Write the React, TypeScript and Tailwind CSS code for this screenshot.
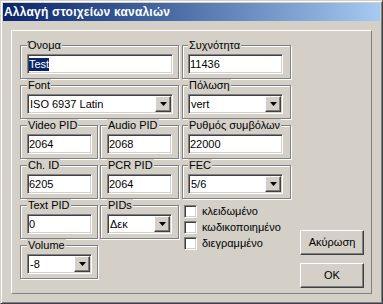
import React from "react";

// Win2000 style bevels
const sunken =
  "border border-t-[#808080] border-l-[#808080] border-b-white border-r-white shadow-[inset_1px_1px_0_#404040,inset_-1px_-1px_0_#d4d0c8]";
const raised =
  "border border-t-white border-l-white border-b-[#404040] border-r-[#404040] shadow-[inset_-1px_-1px_0_#808080]";

function Group({
  label,
  className = "",
  children,
}: {
  label: string;
  className?: string;
  children: React.ReactNode;
}) {
  return (
    <div
      className={`h-[34px] border border-[#808080] shadow-[inset_1px_1px_0_#fff,1px_1px_0_#fff] pl-[6px] ${className}`}
    >
      <div className="-mt-[7px] w-fit bg-[#d4d0c8] px-[1px] leading-[13px]">{label}</div>
      {children}
    </div>
  );
}

function Edit({ value, w }: { value: React.ReactNode; w: string }) {
  return (
    <div className={`mt-[2px] flex h-[20px] items-center bg-white pl-[1px] ${sunken} ${w}`}>
      {value}
    </div>
  );
}

function Combo({ value, w }: { value: string; w: string }) {
  return (
    <div className={`mt-[2px] flex h-[20px] items-center bg-white ${sunken} ${w}`}>
      <span className="flex-1 pl-[2px]">{value}</span>
      <div
        className={`mr-[1px] flex h-[16px] w-[16px] items-center justify-center bg-[#d4d0c8] ${raised}`}
      >
        <svg width="7" height="4" viewBox="0 0 7 4">
          <polygon points="0,0 7,0 3.5,4" fill="#000" />
        </svg>
      </div>
    </div>
  );
}

function Check({ label }: { label: string }) {
  return (
    <div className="flex h-[13px] items-center gap-[5px]">
      <div className={`h-[13px] w-[13px] bg-white ${sunken}`} />
      <span className="leading-[13px]">{label}</span>
    </div>
  );
}

function Btn({ label }: { label: string }) {
  return (
    <div
      className={`flex h-[25px] w-[64px] items-center justify-center bg-[#d4d0c8] ${raised}`}
    >
      {label}
    </div>
  );
}

export default function App() {
  return (
    <div className="h-[304px] w-[383px] bg-[#d4d0c8] font-['Liberation_Sans',Arial,sans-serif] text-[11px] text-black">
      <div className="flex h-full w-full flex-col border border-t-[#d4d0c8] border-l-[#d4d0c8] border-b-[#404040] border-r-[#404040] p-[2px] shadow-[inset_1px_1px_0_#fff,inset_-1px_-1px_0_#808080]">
        {/* title bar */}
        <div className="flex h-[18px] items-center bg-linear-to-r from-[#0a246a] to-[#a6caf0] pl-[1px]">
          <span className="text-[12px] font-bold tracking-[0.2px] text-white">
            Αλλαγή στοιχείων καναλιών
          </span>
        </div>

        {/* main panel */}
        <div className="mx-[8px] mb-[7px] mt-[9px] flex flex-1 border border-t-white border-l-white border-b-[#808080] border-r-[#808080]">
          <div className="grid grid-cols-[80px_82px_110px] gap-y-[6px] self-start pl-[8px] pt-[14px]">
            <Group label="Όνομα" className="col-span-2 w-[159px]">
              <Edit
                w="w-[146px]"
                value={<span className="bg-[#0a246a] leading-[13px] text-white">Test</span>}
              />
            </Group>
            <Group label="Συχνότητα" className="w-[109px] !pl-[5px]">
              <Edit w="w-[95px]" value="11436" />
            </Group>

            <Group label="Font" className="col-span-2 w-[159px]">
              <Combo w="w-[146px]" value="ISO 6937 Latin" />
            </Group>
            <Group label="Πόλωση" className="w-[109px] !pl-[5px]">
              <Combo w="w-[95px]" value="vert" />
            </Group>

            <Group label="Video PID" className="w-[78px]">
              <Edit w="w-[65px]" value="2064" />
            </Group>
            <Group label="Audio PID" className="w-[79px]">
              <Edit w="w-[65px]" value="2068" />
            </Group>
            <Group label="Ρυθμός συμβόλων" className="w-[109px] !pl-[5px]">
              <Edit w="w-[95px]" value="22000" />
            </Group>

            <Group label="Ch. ID" className="w-[78px]">
              <Edit w="w-[65px]" value="6205" />
            </Group>
            <Group label="PCR PID" className="w-[79px]">
              <Edit w="w-[65px]" value="2064" />
            </Group>
            <Group label="FEC" className="w-[109px] !pl-[5px]">
              <Combo w="w-[95px]" value="5/6" />
            </Group>

            <Group label="Text PID" className="w-[78px]">
              <Edit w="w-[65px]" value="0" />
            </Group>
            <Group label="PIDs" className="w-[79px]">
              <Combo w="w-[65px]" value="Δεκ" />
            </Group>
            <div className="row-span-2 ml-[2px] flex flex-col gap-[3px]">
              <Check label="κλειδωμένο" />
              <Check label="κωδικοποιημένο" />
              <Check label="διεγραμμένο" />
            </div>

            <Group label="Volume" className="w-[78px]">
              <Combo w="w-[65px]" value="-8" />
            </Group>
          </div>

          <div className="ml-[8px] flex flex-col justify-end gap-[8px] pb-[5px]">
            <Btn label="Ακύρωση" />
            <Btn label="OK" />
          </div>
        </div>
      </div>
    </div>
  );
}
